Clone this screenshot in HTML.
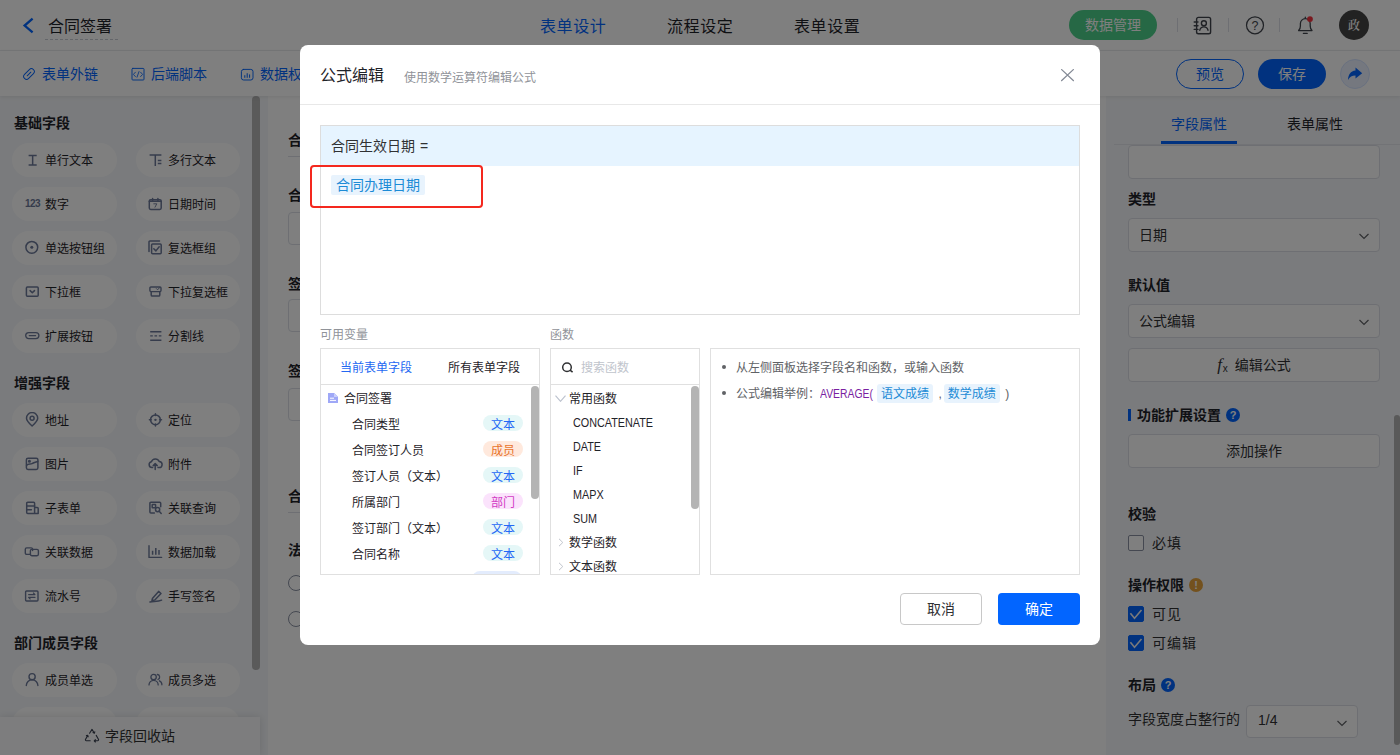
<!DOCTYPE html>
<html lang="zh-CN">
<head>
<meta charset="utf-8">
<title>合同签署 - 表单设计</title>
<style>
*{box-sizing:border-box;margin:0;padding:0}
html,body{width:1400px;height:755px;overflow:hidden;background:#fff}
body{font-family:"Liberation Sans","Noto Sans CJK SC",sans-serif;font-size:14px;color:#1f2329;position:relative}
.abs{position:absolute}
#app{position:absolute;left:0;top:0;width:1400px;height:755px;z-index:0;overflow:hidden}
svg{display:block}
/* ---------- top bar ---------- */
#top{position:absolute;left:0;top:0;width:1400px;height:51px;background:#fff;border-bottom:1px solid #ebedf0}
#top .back{position:absolute;left:22px;top:17px}
#top .title{position:absolute;left:45px;top:12px;height:28px;line-height:29px;padding:0 4px 0 3px;font-size:16px;color:#1f2329;border-bottom:1px dashed #c9cdd4;width:73px}
#top .tabs{position:absolute;left:540px;top:0;height:50px;line-height:53px;letter-spacing:.6px;font-size:16px;color:#1f2329;white-space:nowrap}
#top .tabs span{position:absolute;top:0}
#top .tabs .on{color:#0265ff}
.pill-green{position:absolute;left:1069px;top:10px;width:88px;height:30px;border-radius:15px;background:#4cd08a;color:#fff;font-size:14px;line-height:30px;text-align:center}
.vsep{position:absolute;top:18px;width:1px;height:14px;background:#dcdfe6}
.avatar{position:absolute;left:1339px;top:10px;width:30px;height:30px;border-radius:50%;background:#444;color:#fff;font-size:12px;line-height:32px;text-align:center;font-weight:600;font-family:"Liberation Serif","Noto Serif CJK SC",serif}
/* ---------- sub bar ---------- */
#sub{position:absolute;left:0;top:51px;width:1400px;height:45px;background:#fff;box-shadow:0 1px 4px rgba(0,0,0,.09);z-index:2}
#sub .lk{position:absolute;top:0;height:45px;line-height:47px;font-size:14px;color:#0265ff;white-space:nowrap}
#sub .lk svg{position:absolute;left:-20px;top:16px}
.btn-o{position:absolute;left:1176px;top:8px;width:68px;height:30px;border-radius:15px;border:1px solid #0265ff;color:#0265ff;font-size:14px;line-height:28px;text-align:center}
.btn-f{position:absolute;left:1258px;top:8px;width:68px;height:30px;border-radius:15px;background:#0265ff;color:#fff;font-size:14px;line-height:30px;text-align:center}
.btn-c{position:absolute;left:1340px;top:8px;width:30px;height:30px;border-radius:50%;background:#eaf1ff;border:1px solid #d4e2ff}

/* ---------- sidebar ---------- */
#side{position:absolute;left:0;top:96px;width:268px;height:659px;background:#f5f7fa;overflow:hidden}
#side .gh{position:absolute;left:14px;height:20px;line-height:20px;font-size:14px;font-weight:bold;color:#1f2329}
#side .fp{position:absolute;left:12px;width:105px;height:34px;border-radius:17px;background:#fff;font-size:12px;line-height:36px;padding-left:33px;color:#1f2329;white-space:nowrap}
#side .fp.b{left:135.5px;width:104.5px;padding-left:32.5px}
#side .fp.b i{left:12.5px}
#side .fp i{position:absolute;left:12px;top:9px;width:16px;height:16px;display:block;font-style:normal}
#side .n123{position:absolute;left:1px;top:0;font-size:10px;font-weight:bold;line-height:16px;color:#6c7999;letter-spacing:-.6px}
#side .sbar{position:absolute;left:252px;top:0;width:8px;height:574px;border-radius:4px;background:#b4b4b4}
#side .recycle{position:absolute;left:0;top:621px;width:260px;height:38px;background:#fafbfc;box-shadow:0 0 8px rgba(0,0,0,.12);font-size:14px;color:#303133;line-height:39px}
#side .recycle svg{position:absolute;left:84px;top:11px}
#side .recycle span{position:absolute;left:105px;top:0}

/* ---------- canvas ---------- */
#canvas{position:absolute;left:268px;top:96px;width:838px;height:659px;background:#fff;overflow:hidden}
#canvas .st{position:absolute;left:20px;font-size:14px;font-weight:bold;color:#1f2329;height:20px;line-height:20px;white-space:nowrap}
#canvas .ln{position:absolute;left:20px;width:798px;height:1px;background:#dcdfe6}
#canvas .ip{position:absolute;left:20px;width:380px;height:33px;border:1px solid #dcdfe6;border-radius:4px;background:#fff}
#canvas .rd{position:absolute;left:20px;width:16px;height:16px;border:1px solid #8a91a3;border-radius:50%;background:#fff}
#canvas .rl{position:absolute;left:44px;font-size:14px;height:20px;line-height:20px;color:#303133}
/* ---------- right panel ---------- */
#right{position:absolute;left:1106px;top:96px;width:294px;height:659px;background:#f5f7fa;overflow:hidden;color:#1f2329}
#right .tab{position:absolute;top:18px;height:20px;line-height:20px;font-size:14px;color:#1f2329;white-space:nowrap}
#right .tab.on{color:#0265ff}
#right .tln{position:absolute;left:8px;top:48px;width:286px;height:1px;background:#e4e7ed}
#right .tul{position:absolute;left:55px;top:45px;width:76px;height:3px;background:#0265ff}
#right .lb{position:absolute;left:22px;height:20px;line-height:20px;font-size:14px;font-weight:bold;white-space:nowrap}
#right .bx{position:absolute;left:22px;width:252px;height:34px;border:1px solid #dcdfe6;border-radius:4px;background:#fff;font-size:14px;line-height:32px;padding-left:10px;color:#303133;white-space:nowrap}
#right .bx.c{text-align:center;padding-left:0}
#right .chev{position:absolute;right:9px;top:11px}
#right .cb{position:absolute;left:22px;width:16px;height:16px;border:1px solid #8a91a3;border-radius:2px;background:#fff}
#right .cb.on{background:#0265ff;border-color:#0265ff}
#right .cl{position:absolute;left:46px;height:20px;line-height:20px;font-size:14px;letter-spacing:1px;color:#303133;white-space:nowrap}
#right .hp{position:absolute;width:14px;height:14px;border-radius:50%;background:#0265ff;color:#fff;font-size:11px;font-weight:bold;line-height:14px;text-align:center}
#right .rsb{position:absolute;left:288px;top:319px;width:6px;height:330px;border-radius:3px;background:#b2b2b2}
/* ---------- mask + modal ---------- */
#mask{position:absolute;left:0;top:0;width:1400px;height:755px;background:rgba(0,0,0,.5)}
#modal{position:absolute;left:300px;top:45px;width:800px;height:600px;background:#fff;border-radius:8px;color:#303133}

#modal .hd{position:absolute;left:0;top:0;width:800px;height:60px;border-bottom:1px solid #e8e8e8}
#modal .hd .t{position:absolute;left:20px;top:19px;height:24px;line-height:24px;font-size:16px;color:#1f2329;white-space:nowrap}
#modal .hd .s{position:absolute;left:104px;top:23px;height:20px;line-height:20px;font-size:12px;color:#909399;white-space:nowrap}
#modal .hd svg{position:absolute;left:761px;top:24px}
#fbox{position:absolute;left:20px;top:80px;width:760px;height:190px;border:1px solid #dddddd;background:#fff}
#fbox .fh{position:absolute;left:0;top:0;width:758px;height:40px;background:#e6f4ff;font-size:14px;line-height:40px;padding-left:10px;color:#303133;white-space:nowrap;word-spacing:1px}
#fbox .tg{position:absolute;left:10px;top:49px;height:20px;line-height:20px;padding:0 5px;font-size:14px;color:#1c8bd6;background:#e8f3fd;border-radius:2px;white-space:nowrap}
#redbox{position:absolute;left:9.5px;top:119.5px;width:173px;height:43.5px;border:2.5px solid #f4281e;border-radius:4px}
#modal .cap{position:absolute;top:280px;height:20px;line-height:20px;font-size:12px;color:#909399}
.pn{position:absolute;top:303px;height:227px;border:1px solid #e0e0e0;background:#fff;overflow:hidden;font-size:12px;color:#1f2329}
.pn .ph{position:absolute;left:0;top:0;right:0;height:36px;border-bottom:1px solid #e0e0e0}
.pn .sb{position:absolute;width:8px;border-radius:4px;background:#b4b4b4}
.pn .r{position:absolute;height:20px;line-height:22px;white-space:nowrap}
.pn .tag{position:absolute;left:162px;width:40px;height:16px;line-height:20px;border-radius:8px;text-align:center;font-size:12px}
.tag.tx{background:#e5f7f7;color:#2468f5}
.tag.mb{background:#ffe9dd;color:#e8742c}
.tag.dp{background:#fbe3fc;color:#d23cc4}
.tag.dt{background:#e3ecfd;color:#2468f5}
.lat{display:inline-block;transform:scaleX(.9);transform-origin:0 50%}
b.lat{transform:scaleX(.865)}
#help .li{position:absolute;left:25px;height:20px;line-height:22px;font-size:12px;color:#606266;white-space:nowrap}
#help .li:before{content:"";position:absolute;left:-14px;top:8px;width:4px;height:4px;border-radius:50%;background:#606266}
#help .li b{font-weight:normal;color:#7a1fa2}
#help .li em{font-style:normal;display:inline-block;height:19px;line-height:21px;padding:0 4px;border-radius:3px;background:#e8f3fd;color:#1c8bd6;margin:0 5.5px 0 2px;position:relative;top:-1px;vertical-align:top;margin-top:2px}
.mbtn{position:absolute;top:548px;width:82px;height:32px;border-radius:4px;font-size:14px;line-height:30px;text-align:center}
.mbtn.c{left:600px;border:1px solid #c8c8c8;color:#303133;background:#fff}
.mbtn.o{left:698px;background:#0265ff;color:#fff;line-height:32px}
</style>
</head>
<body>
<div id="app">
  <div id="top">
    <svg class="back" width="14" height="17" viewBox="0 0 14 17"><path d="M10.6 1.6 L2.6 8.6 L10.6 15.4" fill="none" stroke="#0265ff" stroke-width="2.3"/></svg>
    <div class="title">合同签署</div>
    <div class="tabs"><span class="on" style="left:0">表单设计</span><span style="left:127px">流程设定</span><span style="left:254px">表单设置</span></div>
    <div class="pill-green">数据管理</div>
    <div class="vsep" style="left:1177px"></div>
    <div class="vsep" style="left:1228px"></div>
    <div class="vsep" style="left:1279px"></div>
    <svg class="abs" style="left:1193px;top:16px" width="19" height="19" viewBox="0 0 19 19" fill="none" stroke="#41454d" stroke-width="1.4" stroke-linecap="round" stroke-linejoin="round"><rect x="3.6" y="1.4" width="14" height="16.4" rx="1.8"/><path d="M1.2 6H5M1.2 9.7H5M1.2 13.4H5"/><circle cx="10.9" cy="7.2" r="2.5"/><path d="M6.8 14.2A4.2 4.2 0 0 1 15 14.2"/></svg>
    <svg class="abs" style="left:1245px;top:15px" width="20" height="20" viewBox="0 0 20 20" fill="none" stroke="#41454d" stroke-width="1.25"><circle cx="10" cy="10.3" r="8.5"/><text x="10" y="14.6" text-anchor="middle" font-family="Liberation Sans,sans-serif" font-size="12.5" fill="#41454d" stroke="none">?</text></svg>
    <svg class="abs" style="left:1296px;top:15px" width="20" height="20" viewBox="0 0 20 20" fill="none" stroke="#41454d" stroke-width="1.3" stroke-linecap="round" stroke-linejoin="round"><path d="M9.3 2.2V3.4M2.6 15.6H16C14.6 14.4 14.2 13 14.2 11V8.6A4.9 4.9 0 0 0 4.4 8.6V11C4.4 13 4 14.4 2.6 15.6ZM7.4 18.4H11.2"/><circle cx="14" cy="4.1" r="2.9" fill="#f5333f" stroke="none"/></svg>
    <div class="avatar">政</div>
  </div>
  <div id="sub">
    <div class="lk" style="left:42px"><svg width="14" height="14" viewBox="0 0 14 14" fill="none" stroke="#0265ff" stroke-width=".95" stroke-linecap="round" stroke-linejoin="round"><g transform="rotate(-45 7 7)"><rect x=".7" y="4.1" width="12.6" height="5.8" rx="2.9"/><path d="M4.4 7H9.6"/></g></svg>表单外链</div>
    <div class="lk" style="left:151px"><svg width="14" height="14" viewBox="0 0 14 14" fill="none" stroke="#0265ff" stroke-width=".95" stroke-linecap="round" stroke-linejoin="round"><rect x="1" y="1.4" width="12" height="11.6" rx=".8"/><path d="M4.4 5.2L2.4 7.4L4.4 9.6M9.6 5.2L11.6 7.4L9.6 9.6M8 4.6L6 10.2" stroke-width=".85"/></svg>后端脚本</div>
    <div class="lk" style="left:260px"><svg width="14" height="14" viewBox="0 0 14 14" fill="none" stroke="#0265ff" stroke-width=".95" stroke-linecap="round" stroke-linejoin="round"><rect x="1.4" y="2.4" width="11.6" height="10.6" rx="2.2"/><path d="M4.8 8.6V10.4M7.2 6.6V10.4M9.6 7.8V10.4" stroke-width="1"/></svg>数据权限</div>
    <div class="btn-o">预览</div>
    <div class="btn-f">保存</div>
    <div class="btn-c"><svg width="16" height="14" viewBox="0 0 16 14" style="position:absolute;left:6px;top:7px"><path d="M8.5 .6L15.2 6.2L8.5 11.6V8.6C5 8.6 2.6 10 1 13C1.2 8 3.6 4 8.5 3.6Z" fill="#0265ff"/></svg></div>
  </div>
  <div id="side">
<div class="gh" style="top:17px">基础字段</div>
<div class="fp" style="top:47px"><i><svg width="16" height="16" viewBox="0 0 16 16" fill="none" stroke="#6c7999" stroke-width="1.5" stroke-linecap="round" stroke-linejoin="round"><path d="M4.6 3.5H12.7M8.65 3.5V13.1M4.6 13.1H12.7" stroke-linecap="butt"/></svg></i>单行文本</div>
<div class="fp b" style="top:47px"><i><svg width="16" height="16" viewBox="0 0 16 16" fill="none" stroke="#6c7999" stroke-width="1.5" stroke-linecap="round" stroke-linejoin="round"><path d="M1.6 3H13.4M7.3 3V14M9.8 8.5H13.4M9.8 11.5H13.4" stroke-linecap="butt"/></svg></i>多行文本</div>
<div class="fp" style="top:91px"><i><span class="n123">123</span></i>数字</div>
<div class="fp b" style="top:91px"><i><svg width="16" height="16" viewBox="0 0 16 16" fill="none" stroke="#6c7999" stroke-width="1.5" stroke-linecap="round" stroke-linejoin="round"><rect x="1.3" y="3.8" width="11.9" height="9.6" rx="1.4"/><path d="M1.3 5.2H13.2" stroke-width="1.6"/><path d="M4.6 2.6V5M9.9 2.6V5"/><path d="M5.8 7.8H8.8L7 11.2" stroke-width=".9"/></svg></i>日期时间</div>
<div class="fp" style="top:135px"><i><svg width="16" height="16" viewBox="0 0 16 16" fill="none" stroke="#6c7999" stroke-width="1.5" stroke-linecap="round" stroke-linejoin="round"><circle cx="7.8" cy="7.3" r="5.9"/><circle cx="7.8" cy="7.3" r="1.5" fill="#6c7999" stroke="none"/></svg></i>单选按钮组</div>
<div class="fp b" style="top:135px"><i><svg width="16" height="16" viewBox="0 0 16 16" fill="none" stroke="#6c7999" stroke-width="1.5" stroke-linecap="round" stroke-linejoin="round"><path d="M1 11.5V2A.9 .9 0 0 1 1.9 1.1H11.5"/><rect x="3.6" y="4.1" width="9.6" height="9.7" rx="1"/><path d="M5.8 8.8L7.9 10.9L11.2 6.8"/></svg></i>复选框组</div>
<div class="fp" style="top:179px"><i><svg width="16" height="16" viewBox="0 0 16 16" fill="none" stroke="#6c7999" stroke-width="1.5" stroke-linecap="round" stroke-linejoin="round"><rect x="2.4" y="3" width="11.8" height="9.2" rx="1"/><path d="M6.1 6.6L8.3 8.8L10.5 6.6"/></svg></i>下拉框</div>
<div class="fp b" style="top:179px"><i><svg width="16" height="16" viewBox="0 0 16 16" fill="none" stroke="#6c7999" stroke-width="1.5" stroke-linecap="round" stroke-linejoin="round"><rect x="1.9" y="3" width="11.1" height="4.6" rx="1" stroke-width="1.4"/><path d="M8.4 4.6L9.6 5.8L11.6 3.6" stroke-width="1"/><path d="M3.2 7.8V11A1.1 1.1 0 0 0 4.3 12.1H10.7A1.1 1.1 0 0 0 11.8 11V7.8"/></svg></i>下拉复选框</div>
<div class="fp" style="top:223px"><i><svg width="16" height="16" viewBox="0 0 16 16" fill="none" stroke="#6c7999" stroke-width="1.5" stroke-linecap="round" stroke-linejoin="round"><rect x="1.7" y="4.6" width="13.2" height="6" rx="3" stroke-width="1.3"/><path d="M5.2 7.6H11.6" stroke-width="1.2"/></svg></i>扩展按钮</div>
<div class="fp b" style="top:223px"><i><svg width="16" height="16" viewBox="0 0 16 16" fill="none" stroke="#6c7999" stroke-width="1.5" stroke-linecap="round" stroke-linejoin="round"><path d="M2.2 3.7H13.4M2.2 12.2H13.4" stroke-linecap="butt" stroke-width="1.4"/><path d="M2.2 7.9H13.4" stroke-dasharray="2.6 1.7" stroke-linecap="butt" stroke-width="1.4"/></svg></i>分割线</div>
<div class="gh" style="top:277px">增强字段</div>
<div class="fp" style="top:307px"><i><svg width="16" height="16" viewBox="0 0 16 16" fill="none" stroke="#6c7999" stroke-width="1.5" stroke-linecap="round" stroke-linejoin="round"><path d="M8.1 14C4.6 10.8 2.5 8.6 2.5 6.2A5.6 5.6 0 0 1 13.7 6.2C13.7 8.6 11.6 10.8 8.1 14Z"/><circle cx="8.1" cy="6.3" r="2"/></svg></i>地址</div>
<div class="fp b" style="top:307px"><i><svg width="16" height="16" viewBox="0 0 16 16" fill="none" stroke="#6c7999" stroke-width="1.5" stroke-linecap="round" stroke-linejoin="round"><circle cx="7.45" cy="7.85" r="4.9" stroke-width="1.5"/><path d="M7.45 1.8V3.6M7.45 12.1V13.9M1.4 7.85H3.2M11.7 7.85H13.5" stroke-width="1.5"/><circle cx="7.45" cy="7.85" r="1.2" fill="#6c7999" stroke="none"/></svg></i>定位</div>
<div class="fp" style="top:351px"><i><svg width="16" height="16" viewBox="0 0 16 16" fill="none" stroke="#6c7999" stroke-width="1.5" stroke-linecap="round" stroke-linejoin="round"><rect x="2.4" y="2.2" width="11.5" height="11.2" rx="1.6"/><path d="M2.6 9.4C4.4 7 6 8.4 8 7.6S11.6 5.6 13.8 5.4"/><circle cx="5.4" cy="5.2" r=".8"/></svg></i>图片</div>
<div class="fp b" style="top:351px"><i><svg width="16" height="16" viewBox="0 0 16 16" fill="none" stroke="#6c7999" stroke-width="1.5" stroke-linecap="round" stroke-linejoin="round"><path d="M4.6 11.6H4A3 3 0 0 1 3.4 5.7A4.2 4.2 0 0 1 11.2 5.4A3.1 3.1 0 0 1 10.8 11.6H10"/><path d="M7.2 13.4V7.8M5.2 9.6L7.2 7.6L9.2 9.6"/></svg></i>附件</div>
<div class="fp" style="top:395px"><i><svg width="16" height="16" viewBox="0 0 16 16" fill="none" stroke="#6c7999" stroke-width="1.5" stroke-linecap="round" stroke-linejoin="round"><path d="M10.6 7.6V3.3A1 1 0 0 0 9.6 2.3H3.7A1 1 0 0 0 2.7 3.3V12.5A1 1 0 0 0 3.7 13.5H14.2V8.6A1 1 0 0 0 13.2 7.6H10.6V13.5"/><path d="M2.7 6H10.6M2.7 9.8H7.4" /></svg></i>子表单</div>
<div class="fp b" style="top:395px"><i><svg width="16" height="16" viewBox="0 0 16 16" fill="none" stroke="#6c7999" stroke-width="1.5" stroke-linecap="round" stroke-linejoin="round"><path d="M12.7 6.8V3.3A1 1 0 0 0 11.7 2.3H2.9A1 1 0 0 0 1.9 3.3V12.1A1 1 0 0 0 2.9 13.1H6.4"/><rect x="4.2" y="4.6" width="3.4" height="3.2" rx=".4"/><circle cx="9.6" cy="9.6" r="2.1"/><path d="M11.2 11.2L13.2 13.4"/></svg></i>关联查询</div>
<div class="fp" style="top:439px"><i><svg width="16" height="16" viewBox="0 0 16 16" fill="none" stroke="#6c7999" stroke-width="1.5" stroke-linecap="round" stroke-linejoin="round"><path d="M6.4 10.4H2.7A1.4 1.4 0 0 1 1.3 9V5.3A1.4 1.4 0 0 1 2.7 3.9H7.2A1.4 1.4 0 0 1 8.6 5.3V6.6" stroke-width="1.4"/><rect x="6.4" y="5.4" width="8" height="6.3" rx="1.4" stroke-width="1.4"/></svg></i>关联数据</div>
<div class="fp b" style="top:439px"><i><svg width="16" height="16" viewBox="0 0 16 16" fill="none" stroke="#6c7999" stroke-width="1.5" stroke-linecap="round" stroke-linejoin="round"><path d="M1 1.8V13.4H13.6" stroke-width="1.4"/><path d="M4.6 6.8V10.8M7.8 4V10.8M11 6V10.8" stroke-width="1.5" stroke-linecap="butt"/></svg></i>数据加载</div>
<div class="fp" style="top:483px"><i><svg width="16" height="16" viewBox="0 0 16 16" fill="none" stroke="#6c7999" stroke-width="1.5" stroke-linecap="round" stroke-linejoin="round"><rect x="1.6" y="3" width="12.4" height="10" rx="1" stroke-width="1.4"/><path d="M4.6 6.6H11M9.4 5L11 6.6M11 9.4H4.6M4.6 9.4L6.2 11" stroke-width="1.1"/></svg></i>流水号</div>
<div class="fp b" style="top:483px"><i><svg width="16" height="16" viewBox="0 0 16 16" fill="none" stroke="#6c7999" stroke-width="1.5" stroke-linecap="round" stroke-linejoin="round"><path d="M4.4 10.6L10.6 3.4L13 5.6L6.8 12L3.9 12.4Z"/><path d="M2 14C5 13 9.6 14.2 13.6 12.2"/></svg></i>手写签名</div>
<div class="gh" style="top:537px">部门成员字段</div>
<div class="fp" style="top:567px"><i><svg width="16" height="16" viewBox="0 0 16 16" fill="none" stroke="#6c7999" stroke-width="1.5" stroke-linecap="round" stroke-linejoin="round"><circle cx="8.1" cy="4.7" r="3.1" stroke-width="1.4"/><path d="M2.3 13.6A5.8 5.8 0 0 1 13.9 13.6" stroke-width="1.4"/></svg></i>成员单选</div>
<div class="fp b" style="top:567px"><i><svg width="16" height="16" viewBox="0 0 16 16" fill="none" stroke="#6c7999" stroke-width="1.5" stroke-linecap="round" stroke-linejoin="round"><circle cx="5.6" cy="5" r="2.7" stroke-width="1.3"/><path d="M1 12.9A4.6 4.6 0 0 1 10.2 12.9" stroke-width="1.3"/><path d="M9.4 2.5A2.6 2.6 0 0 1 10 7.5M11.4 8.8A4.4 4.4 0 0 1 13.9 12.8" stroke-width="1.3"/></svg></i>成员多选</div>
<div class="fp" style="top:611px"><i></i>部门单选</div>
<div class="fp b" style="top:611px"><i></i>部门多选</div>
<div class="sbar"></div>
<div class="recycle"><svg width="16" height="16" viewBox="0 0 16 16" fill="none" stroke="#3c4353" stroke-width="1.1" stroke-linecap="round" stroke-linejoin="round"><path d="M5.6 5.2L8 1.4L10.4 5.2M9 4.6L10.4 5.2L10.8 3.8"/><path d="M12.2 7.4L14.4 11.2A1 1 0 0 1 13.5 12.8H10.2M11.4 11.6L10.2 12.8L11.4 14"/><path d="M6.2 12.8H2.5A1 1 0 0 1 1.6 11.2L3.8 7.4M2.4 7.6L3.8 7.4L4.2 8.8"/></svg><span>字段回收站</span></div>
</div>
  <div id="canvas">
    <div class="st" style="top:34px">合同基本信息</div>
    <div class="ln" style="top:60px"></div>
    <div class="st" style="top:89px">合同类型</div>
    <div class="ip" style="top:116px"></div>
    <div class="st" style="top:178px">签订人员</div>
    <div class="ip" style="top:203px"></div>
    <div class="st" style="top:265px">签订部门</div>
    <div class="ip" style="top:292px"></div>
    <div class="st" style="top:390px">合同主体信息</div>
    <div class="ln" style="top:416px"></div>
    <div class="st" style="top:444px">法务审核意见</div>
    <div class="rd" style="top:479px"></div><div class="rl" style="top:477px">同意</div>
    <div class="rd" style="top:515px"></div><div class="rl" style="top:513px">不同意</div>
  </div>
  <div id="right">
    <div class="bx" style="top:49px;height:34px"></div>
    <div style="position:absolute;left:0;top:0;width:294px;height:48px;background:#f5f7fa"></div>
    <div class="tab on" style="left:65px">字段属性</div>
    <div class="tab" style="left:181px">表单属性</div>
    <div class="tln"></div><div class="tul"></div>
    <div class="lb" style="top:93px">类型</div>
    <div class="bx" style="top:122px">日期<svg class="chev" width="12" height="12" viewBox="0 0 12 12"><path d="M1.5 4L6 8.5L10.5 4" fill="none" stroke="#606266" stroke-width="1.2"/></svg></div>
    <div class="lb" style="top:179px">默认值</div>
    <div class="bx" style="top:208px">公式编辑<svg class="chev" width="12" height="12" viewBox="0 0 12 12"><path d="M1.5 4L6 8.5L10.5 4" fill="none" stroke="#606266" stroke-width="1.2"/></svg></div>
    <div class="bx c" style="top:252px"><span style="font-family:'Liberation Serif',serif;font-style:italic;font-size:17px;line-height:20px">f</span><span style="font-size:10px;vertical-align:-2px;margin-right:7px;margin-left:1px">x</span>编辑公式</div>
    <div style="position:absolute;left:22px;top:313px;width:3px;height:12px;background:#0265ff"></div>
    <div class="lb" style="top:309px;left:31px">功能扩展设置</div>
    <div class="hp" style="left:120px;top:312px">?</div>
    <div class="bx c" style="top:338px">添加操作</div>
    <div class="lb" style="top:408px">校验</div>
    <div class="cb" style="top:439px"></div><div class="cl" style="top:437px">必填</div>
    <div class="lb" style="top:479px">操作权限</div>
    <div class="hp" style="left:83px;top:482px;background:#e6a23c">!</div>
    <div class="cb on" style="top:510px"><svg width="14" height="14" viewBox="0 0 14 14"><path d="M1.4 6.2L5.5 11.2L12.5 3" fill="none" stroke="#f4f4f4" stroke-width="1.6"/></svg></div><div class="cl" style="top:508px">可见</div>
    <div class="cb on" style="top:539px"><svg width="14" height="14" viewBox="0 0 14 14"><path d="M1.4 6.2L5.5 11.2L12.5 3" fill="none" stroke="#f4f4f4" stroke-width="1.6"/></svg></div><div class="cl" style="top:537px">可编辑</div>
    <div class="lb" style="top:579px">布局</div>
    <div class="hp" style="left:55px;top:582px">?</div>
    <div class="cl" style="left:22px;top:613px;letter-spacing:0">字段宽度占整行的</div>
    <div class="bx" style="left:140px;top:609px;width:112px;height:33px;line-height:29px;padding-left:11px">1/4<svg class="chev" width="12" height="12" viewBox="0 0 12 12"><path d="M1.5 4L6 8.5L10.5 4" fill="none" stroke="#606266" stroke-width="1.2"/></svg></div>
    <div class="rsb"></div>
  </div>
</div>
<div id="mask"></div>
<div id="modal">
  <div class="hd"><div class="t">公式编辑</div><div class="s">使用数学运算符编辑公式</div>
    <svg width="13" height="13" viewBox="0 0 13 13"><path d="M.2 .2L12.8 12M12.8 .2L.2 12" fill="none" stroke="#838995" stroke-width="1.2"/></svg></div>
  <div id="fbox"><div class="fh">合同生效日期 =</div><div class="tg">合同办理日期</div></div>
  <div id="redbox"></div>
  <div class="cap" style="left:20px">可用变量</div>
  <div class="cap" style="left:250px">函数</div>
  <div class="pn" id="vars" style="left:20px;width:220px">
    <div class="ph"><div class="r" style="left:19px;top:8px;color:#2468f2">当前表单字段</div><div class="r" style="left:127px;top:8px">所有表单字段</div></div>
    <svg width="10" height="10" viewBox="0 0 10 10" style="position:absolute;left:7px;top:44px"><path d="M0 0H6.2L10 3.8V10H0Z" fill="#9fa8f7"/><path d="M6 0V4H10" fill="#c9cffb"/><path d="M2 5.2H6M2 7.4H8" stroke="#fff" stroke-width="1"/></svg>
    <div class="r" style="left:23px;top:39px">合同签署</div>
    <div class="r" style="left:31px;top:65px">合同类型</div><div class="tag tx" style="top:66px">文本</div>
<div class="r" style="left:31px;top:91px">合同签订人员</div><div class="tag mb" style="top:92px">成员</div>
<div class="r" style="left:31px;top:117px">签订人员（文本）</div><div class="tag tx" style="top:118px">文本</div>
<div class="r" style="left:31px;top:143px">所属部门</div><div class="tag dp" style="top:144px">部门</div>
<div class="r" style="left:31px;top:169px">签订部门（文本）</div><div class="tag tx" style="top:170px">文本</div>
<div class="r" style="left:31px;top:195px">合同名称</div><div class="tag tx" style="top:196px">文本</div>
<div class="r" style="left:31px;top:221px">合同办理日期</div><div class="tag dt" style="top:222px;left:151px;width:50px;line-height:28px;overflow:hidden">下拉框</div>

    <div class="sb" style="left:210px;top:37px;height:113px"></div>
  </div>
  <div class="pn" id="fns" style="left:250px;width:150px">
    <div class="ph"><svg width="13" height="13" viewBox="0 0 13 13" style="position:absolute;left:10px;top:12px"><circle cx="6" cy="6.2" r="4.3" fill="none" stroke="#303133" stroke-width="1.5"/><path d="M9 9.2L11.6 11.2" stroke="#303133" stroke-width="1.6"/></svg><div class="r" style="left:30px;top:8px;color:#c0c4cc">搜索函数</div></div>
    <svg width="11" height="7" viewBox="0 0 11 7" style="position:absolute;left:4px;top:46px"><path d="M.5 .6L5.5 6.3L10.5 .6" fill="none" stroke="#bcc2ce" stroke-width="1.15"/></svg>
    <div class="r" style="left:18px;top:39px">常用函数</div>
    <div class="r lat" style="left:22px;top:63px">CONCATENATE</div>
<div class="r lat" style="left:22px;top:87px">DATE</div>
<div class="r lat" style="left:22px;top:111px">IF</div>
<div class="r lat" style="left:22px;top:135px">MAPX</div>
<div class="r lat" style="left:22px;top:159px">SUM</div>

    <svg width="6" height="9" viewBox="0 0 6 9" style="position:absolute;left:7px;top:189px"><path d="M1 .8L4.8 4.5L1 8.2" fill="none" stroke="#c0c4cc" stroke-width="1"/></svg><div class="r" style="left:18px;top:183px">数学函数</div>
    <svg width="6" height="9" viewBox="0 0 6 9" style="position:absolute;left:7px;top:213px"><path d="M1 .8L4.8 4.5L1 8.2" fill="none" stroke="#c0c4cc" stroke-width="1"/></svg><div class="r" style="left:18px;top:207px">文本函数</div>
    <div class="sb" style="left:140px;top:37px;height:123px"></div>
  </div>
  <div class="pn" id="help" style="left:410px;width:370px">
    <div class="li" style="top:8px">从左侧面板选择字段名和函数，或输入函数</div>
    <div class="li" style="top:34px">公式编辑举例：<b class="lat" style="margin-right:-9.5px">AVERAGE(</b> <em>语文成绩</em>,<em>数学成绩</em>)</div>
  </div>
  <div class="mbtn c">取消</div><div class="mbtn o">确定</div>
</div>
</body>
</html>
